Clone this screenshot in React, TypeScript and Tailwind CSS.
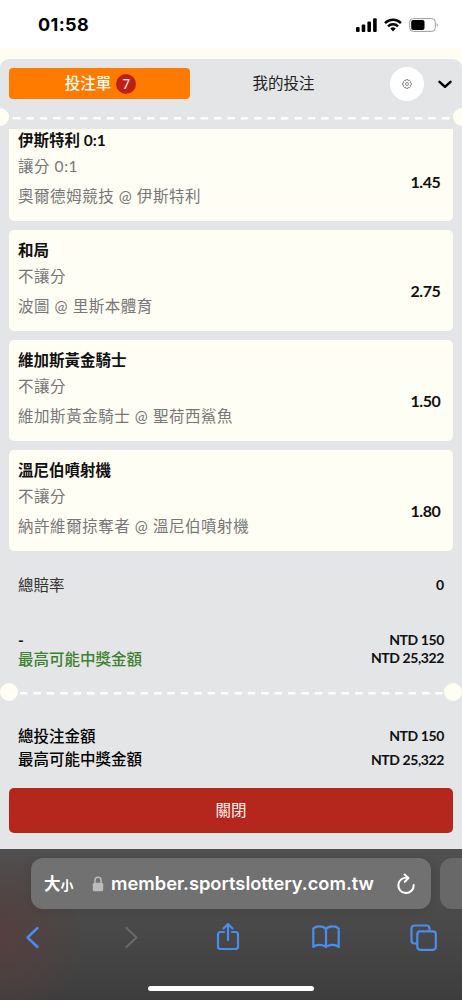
const bets = [
  { pick: "伊斯特利 0:1", market: "讓分 0:1", match: "奧爾德姆競技 @ 伊斯特利", odds: "1.45" },
  { pick: "和局", market: "不讓分", match: "波圖 @ 里斯本體育", odds: "2.75" },
  { pick: "維加斯黃金騎士", market: "不讓分", match: "維加斯黃金騎士 @ 聖荷西鯊魚", odds: "1.50" },
  { pick: "溫尼伯噴射機", market: "不讓分", match: "納許維爾掠奪者 @ 溫尼伯噴射機", odds: "1.80" },
];

function StatusBar() {
  return (
    <div className="flex h-12 shrink-0 items-start justify-between bg-white pr-[23px] pl-[38px] font-['Inter',sans-serif]">
      <span className="pt-[13px] text-[18px] leading-6 font-bold tracking-[0.4px] text-black">01:58</span>
      <div className="flex items-center gap-[7px] pt-[18px]">
        <svg width="21" height="14" viewBox="0 0 21 14" fill="#000">
          <rect x="0" y="9" width="3.6" height="5" rx="1" />
          <rect x="5.7" y="6.5" width="3.6" height="7.5" rx="1" />
          <rect x="11.4" y="3.5" width="3.6" height="10.5" rx="1" />
          <rect x="17.1" y="0.3" width="3.6" height="13.7" rx="1" />
        </svg>
        <svg width="18" height="14" viewBox="0 0 18 14" fill="none" stroke="#000" strokeWidth="2.5">
          <path d="M1 5.1a11.5 11.5 0 0 1 16 0" />
          <path d="M4 8.3a7.2 7.2 0 0 1 10 0" />
          <path d="M6.3 10.5a4 4 0 0 1 5.4 0L9 13.4z" fill="#000" stroke="none" />
        </svg>
        <svg width="30" height="14" viewBox="0 0 30 14">
          <rect x="0.7" y="0.6" width="25.6" height="12.8" rx="3.6" fill="none" stroke="#9b9b9b" />
          <rect x="2.2" y="2.1" width="13.3" height="9.8" rx="2" fill="#000" />
          <path d="M27.7 4.9v4.2c1.5-.7 1.5-3.5 0-4.2z" fill="#9b9b9b" />
        </svg>
      </div>
    </div>
  );
}

function Tabs() {
  return (
    <div className="flex h-[49px] items-center px-[9px]">
      <button className="flex h-[31px] w-[181px] items-center justify-center gap-[5px] rounded-[4px] bg-[#ff7b00] pl-[2px] text-[15.5px] font-medium text-[#fffdf0]">
        投注單
        <span className="flex h-5 w-5 items-center justify-center rounded-full bg-[#c01f15] text-[13px] leading-5">7</span>
      </button>
      <button className="w-[187px] text-center text-[15.5px] text-[#222]">我的投注</button>
      <button className="ml-[13px] flex h-[34px] w-[34px] items-center justify-center rounded-full bg-white">
        <svg width="10" height="10" viewBox="0 0 24 24" fill="none" stroke="#666" strokeWidth="1.8">
          <path d="M9.7 1.5h4.6l.7 2.7 2.5-1.3 3.2 3.3-1.3 2.4 3 .9v5l-3 .9 1.3 2.4-3.2 3.3-2.5-1.3-.7 2.7H9.7L9 19.8l-2.5 1.3-3.2-3.3 1.3-2.4-3-.9v-5l3-.9-1.3-2.4 3.2-3.3L9 4.2z" />
          <circle cx="12" cy="12" r="3.6" />
        </svg>
      </button>
      <svg className="ml-[14px]" width="14" height="10" viewBox="0 0 14 10" fill="none" stroke="#000" strokeWidth="2.4" strokeLinecap="round" strokeLinejoin="round">
        <path d="M1.5 2.8 7 7.8l5.5-5" />
      </svg>
    </div>
  );
}

function Perforation({ edge }: { edge?: boolean }) {
  return (
    <div className={edge ? "-mx-[9px] flex h-[18px] items-center" : "flex h-[18px] items-center"}>
      <span className="h-[18px] w-[18px] shrink-0 rounded-full bg-[#fffef3]" />
      <svg className="mt-[2px] h-[3px] min-w-0 flex-1">
        <line x1={edge ? 4 : 2} y1="1.3" x2="100%" y2="1.3" stroke="#fff" strokeWidth="2.4" strokeDasharray="7.4 6" />
      </svg>
      <span className="h-[18px] w-[18px] shrink-0 rounded-full bg-[#fffef3]" />
    </div>
  );
}

function BetCard({ bet }: { bet: (typeof bets)[number] }) {
  return (
    <div className="flex h-[101px] shrink-0 justify-between rounded-[5px] bg-[#fffef5] pr-[12.5px] pl-[9px]">
      <div className="pt-[7px]">
        <div className="text-[15.5px] leading-[26px] font-bold text-[#111]">{bet.pick}</div>
        <div className="text-[15.5px] leading-[26px] tracking-[0.55px] text-[#777]">{bet.market}</div>
        <div className="text-[15.5px] leading-[35px] tracking-[0.55px] text-[#777]">{bet.match}</div>
      </div>
      <div className="flex items-center pt-[22px] text-[16px] font-bold tracking-[-0.4px] text-[#111]">{bet.odds}</div>
    </div>
  );
}

function BrowserBar() {
  return (
    <div className="flex h-[151px] shrink-0 flex-col overflow-hidden bg-[radial-gradient(circle_at_0px_88px,#563f3f_0px,transparent_90px),linear-gradient(#505050,#484848_55%,#3d3d3d)] font-['Inter',sans-serif]">
      <div className="flex gap-[9px] pt-[9px] pl-[31px]">
        <div className="flex h-[51px] w-[400px] shrink-0 items-center rounded-xl bg-[#717171] pl-[13px] text-white shadow-[0_1px_8px_rgba(0,0,0,0.12)]">
          <span className="w-[48px] shrink-0 font-['Noto_Sans_CJK_TC',sans-serif] text-[16.5px] font-bold">
            大<span className="text-[13px]">小</span>
          </span>
          <svg className="shrink-0" width="12" height="16" viewBox="0 0 12 16">
            <path d="M3 7V4.3a3 3 0 0 1 6 0V7" fill="none" stroke="#bcbcbc" strokeWidth="1.5" />
            <rect x="0.8" y="6.7" width="10.4" height="8.6" rx="1.5" fill="#bcbcbc" />
          </svg>
          <span className="ml-[7px] w-[264px] shrink-0 pt-px text-[18.3px] font-semibold whitespace-nowrap">member.sportslottery.com.tw</span>
          <svg className="ml-[21px] shrink-0" width="20" height="22" viewBox="0 0 20 22" fill="none" stroke="#fff" strokeWidth="2" strokeLinecap="round" strokeLinejoin="round">
            <path d="M11.8 4.9A7.7 7.7 0 1 0 17.7 12" />
            <path d="m8.5 1.5 4 3.6-3.7 3.6" />
          </svg>
        </div>
        <div className="h-[51px] w-[40px] shrink-0 rounded-xl bg-[#686868]" />
      </div>
      <div className="flex h-[56px] items-center justify-between px-[25px] text-[#4a8df0]">
        <svg width="15" height="24" viewBox="0 0 15 24" fill="none" stroke="currentColor" strokeWidth="2.5" strokeLinecap="round" strokeLinejoin="round">
          <path d="M12.5 3 2.5 12.5l10 9.5" />
        </svg>
        <svg className="ml-[14px]" width="15" height="24" viewBox="0 0 15 24" fill="none" stroke="#696969" strokeWidth="2.2" strokeLinecap="round" strokeLinejoin="round">
          <path d="m2.5 3 10 9.5-10 9.5" />
        </svg>
        <svg className="ml-[6px]" width="24" height="30" viewBox="0 0 24 30" fill="none" stroke="currentColor" strokeWidth="2.2" strokeLinecap="round" strokeLinejoin="round">
          <path d="M8 10H4.5A2.5 2.5 0 0 0 2 12.5v12A2.5 2.5 0 0 0 4.5 27h15a2.5 2.5 0 0 0 2.5-2.5v-12a2.5 2.5 0 0 0-2.5-2.5H16" />
          <path d="M12 18V2.5M7.5 6.5 12 2l4.5 4.5" />
        </svg>
        <svg className="ml-[2px]" width="28" height="24" viewBox="0 0 28 24" fill="none" stroke="currentColor" strokeWidth="2.2" strokeLinecap="round" strokeLinejoin="round">
          <path d="M14 4C11.5.9 4.5.4 1.3 3.5V22C4.5 19 11.5 19.5 14 22c2.5-2.5 9.5-3 12.7 0V3.5C23.5.4 16.5.9 14 4zM14 4v18" />
        </svg>
        <svg width="27" height="27" viewBox="0 0 27 27" fill="none" stroke="currentColor" strokeWidth="2.2">
          <path d="M7.3 19.5H4.5a3 3 0 0 1-3-3v-12a3 3 0 0 1 3-3h12a3 3 0 0 1 3 3v2.8" />
          <rect x="7.3" y="7.3" width="18.5" height="18.5" rx="3" />
        </svg>
      </div>
      <div className="mx-auto mt-[21px] h-[5px] w-[166px] rounded-full bg-white" />
    </div>
  );
}

export default function App() {
  return (
    <div className="flex h-[1000px] w-[462px] flex-col overflow-hidden bg-[#fffcf2] font-['Lato','Noto_Sans_CJK_TC',sans-serif]">
      <StatusBar />
      <div className="mt-[11px] flex h-[790px] shrink-0 flex-col overflow-hidden rounded-t-[9px] bg-[#e4e5e7]">
        <Tabs />
        <Perforation edge />

        {/* Scrolled list, the first card runs under the header */}
        <div className="mt-[3px] flex h-[422px] shrink-0 flex-col gap-[8.9px] overflow-hidden px-[9px]">
          <div className="-mt-[9px] shrink-0">
            <BetCard bet={bets[0]} />
          </div>
          {bets.slice(1).map((bet) => (
            <BetCard key={bet.pick} bet={bet} />
          ))}
        </div>

        <div className="flex items-center justify-between px-[18px] pt-[21px] text-[#111]">
          <span className="text-[15.5px] leading-6 text-[#333]">總賠率</span>
          <span className="pt-px text-[14px] leading-6 font-bold">0</span>
        </div>

        <div className="mt-[34px] flex justify-between px-[18px] font-bold text-[#111]">
          <div className="text-[15.5px] leading-[19px]">
            <div>-</div>
            <div className="font-medium text-[#3c8130]">最高可能中獎金額</div>
          </div>
          <div className="text-right text-[14px] leading-[18px] tracking-[-0.4px]">
            <div>NTD 150</div>
            <div>NTD 25,322</div>
          </div>
        </div>

        <div className="mt-[14px]">
          <Perforation />
        </div>

        <div className="mt-[23px] flex justify-between px-[18px] font-bold text-[#111]">
          <div className="pt-px text-[15.5px] leading-[23px] font-medium text-black">
            <div>總投注金額</div>
            <div>最高可能中獎金額</div>
          </div>
          <div className="text-right text-[14px] leading-[23.5px] tracking-[-0.4px]">
            <div>NTD 150</div>
            <div>NTD 25,322</div>
          </div>
        </div>

        <button className="mx-[9px] mt-[17px] h-[45px] shrink-0 rounded-[5px] bg-[#b5261c] text-[15.5px] text-[#fff5ed]">關閉</button>
      </div>
      <BrowserBar />
    </div>
  );
}
